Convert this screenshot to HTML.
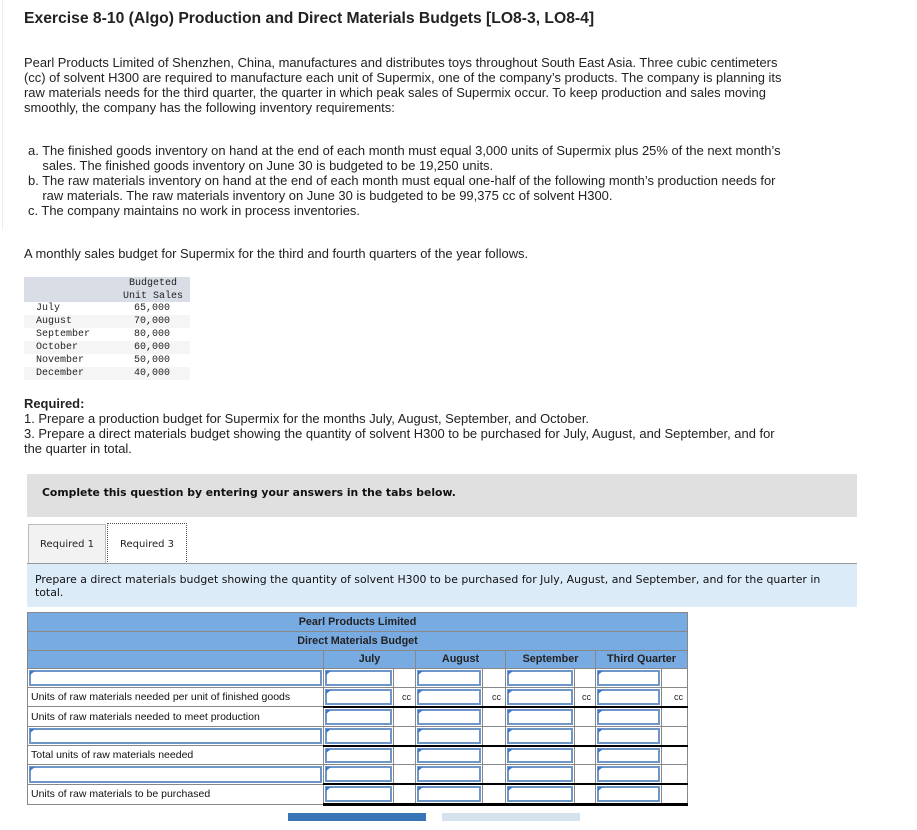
<!DOCTYPE html>
<html><head><meta charset="utf-8"><style>
body{margin:0;width:917px;height:830px;background:#fff;font-family:"Liberation Sans",sans-serif;color:#222;position:relative;overflow:hidden}
.a{position:absolute;white-space:nowrap}
.p{font-size:12.95px;line-height:15px}
.mono{font-family:"Liberation Mono",monospace;font-size:10px;line-height:13px}
table.b{position:absolute;left:27px;top:612px;border-collapse:collapse;font-size:10.5px;table-layout:fixed}
table.b td{border:1px solid #888;height:17.8px;padding:0;position:relative}
.h td{background:#79abe3;text-align:center;font-weight:bold;color:#222;font-size:10.8px}
.in{position:absolute;left:1px;top:1px;right:1px;bottom:1px;border:2px solid #6f96c8;background:#fff}
.in:before{content:"";position:absolute;left:-1px;top:-1px;border-left:5px solid #3a78d0;border-bottom:4px solid transparent}
.lbl{padding-left:3px!important;color:#111}
.cc{text-align:right;padding-right:4px!important;font-size:9px}
tr.tb td.v{border-bottom:2px solid #000}
</style></head><body>
<div class="a" style="left:2px;top:0;width:1px;height:230px;background:#eee"></div>
<div class="a" style="left:24px;top:10px;font-size:15.7px;font-weight:bold;color:#222">Exercise 8-10 (Algo) Production and Direct Materials Budgets [LO8-3, LO8-4]</div>
<div class="a p" style="left:24px;top:55px">Pearl Products Limited of Shenzhen, China, manufactures and distributes toys throughout South East Asia. Three cubic centimeters<br>(cc) of solvent H300 are required to manufacture each unit of Supermix, one of the company’s products. The company is planning its<br>raw materials needs for the third quarter, the quarter in which peak sales of Supermix occur. To keep production and sales moving<br>smoothly, the company has the following inventory requirements:</div>
<div class="a p" style="left:28px;top:143px">a. The finished goods inventory on hand at the end of each month must equal 3,000 units of Supermix plus 25% of the next month’s<br>&nbsp;&nbsp;&nbsp;&nbsp;sales. The finished goods inventory on June 30 is budgeted to be 19,250 units.<br>b. The raw materials inventory on hand at the end of each month must equal one-half of the following month’s production needs for<br>&nbsp;&nbsp;&nbsp;&nbsp;raw materials. The raw materials inventory on June 30 is budgeted to be 99,375 cc of solvent H300.<br>c. The company maintains no work in process inventories.</div>
<div class="a p" style="left:24px;top:246px">A monthly sales budget for Supermix for the third and fourth quarters of the year follows.</div>
<div class="a" style="left:24px;top:277px;width:166px;height:25px;background:#d9dde6"></div>
<div class="a" style="left:24px;top:315px;width:166px;height:13px;background:#f5f5f5"></div>
<div class="a" style="left:24px;top:341px;width:166px;height:13px;background:#f5f5f5"></div>
<div class="a" style="left:24px;top:367px;width:166px;height:13px;background:#f5f5f5"></div>
<div class="a mono" style="left:122px;top:277px;text-align:center;width:62px">Budgeted<br>Unit Sales</div>
<div class="a mono" style="left:36px;top:302px">July<br>August<br>September<br>October<br>November<br>December</div>
<div class="a mono" style="left:134px;top:302px">65,000<br>70,000<br>80,000<br>60,000<br>50,000<br>40,000</div>
<div class="a p" style="left:24px;top:396px"><b>Required:</b><br>1. Prepare a production budget for Supermix for the months July, August, September, and October.<br>3. Prepare a direct materials budget showing the quantity of solvent H300 to be purchased for July, August, and September, and for<br>the quarter in total.</div>
<div class="a" style="left:27px;top:474px;width:830px;height:43px;background:#e0e0e0"></div>
<div class="a" style="left:42px;top:486px;font-family:'DejaVu Sans',sans-serif;font-size:10.8px;font-weight:bold;color:#111">Complete this question by entering your answers in the tabs below.</div>
<div class="a" style="left:28px;top:524px;width:76px;height:39px;background:#f2f2f2;border:1px solid #bbb;border-bottom:none"></div>
<div class="a" style="left:107px;top:523px;width:78px;height:40px;background:#fff;border:1px dotted #556;border-bottom:none"></div>
<div class="a" style="left:40px;top:539px;font-family:'DejaVu Sans',sans-serif;font-size:10px">Required 1</div>
<div class="a" style="left:120px;top:539px;font-family:'DejaVu Sans',sans-serif;font-size:10px">Required 3</div>
<div class="a" style="left:27px;top:563px;width:830px;height:1px;background:#999"></div>
<div class="a" style="left:27px;top:564px;width:830px;height:43px;background:#dbebf8"></div>
<div class="a" style="left:35px;top:573px;font-family:'DejaVu Sans',sans-serif;font-size:10.9px;line-height:13px;color:#111">Prepare a direct materials budget showing the quantity of solvent H300 to be purchased for July, August, and September, and for the quarter in<br>total.</div>
<table class="b">
<colgroup><col style="width:296px"><col style="width:70px"><col style="width:22px"><col style="width:67px"><col style="width:23px"><col style="width:69px"><col style="width:21px"><col style="width:66px"><col style="width:26px"></colgroup>
<tr class="h"><td colspan="9">Pearl Products Limited</td></tr>
<tr class="h"><td colspan="9">Direct Materials Budget</td></tr>
<tr class="h"><td></td><td colspan="2">July</td><td colspan="2">August</td><td colspan="2">September</td><td colspan="2">Third Quarter</td></tr>
<tr><td><div class="in"></div></td><td><div class="in"></div></td><td></td><td><div class="in"></div></td><td></td><td><div class="in"></div></td><td></td><td><div class="in"></div></td><td></td></tr>
<tr class="tb"><td class="lbl">Units of raw materials needed per unit of finished goods</td><td class="v"><div class="in"></div></td><td class="cc v">cc</td><td class="v"><div class="in"></div></td><td class="cc v">cc</td><td class="v"><div class="in"></div></td><td class="cc v">cc</td><td class="v"><div class="in"></div></td><td class="cc v">cc</td></tr>
<tr><td class="lbl">Units of raw materials needed to meet production</td><td><div class="in"></div></td><td></td><td><div class="in"></div></td><td></td><td><div class="in"></div></td><td></td><td><div class="in"></div></td><td></td></tr>
<tr class="tb"><td><div class="in"></div></td><td class="v"><div class="in"></div></td><td class="v"></td><td class="v"><div class="in"></div></td><td class="v"></td><td class="v"><div class="in"></div></td><td class="v"></td><td class="v"><div class="in"></div></td><td class="v"></td></tr>
<tr><td class="lbl">Total units of raw materials needed</td><td><div class="in"></div></td><td></td><td><div class="in"></div></td><td></td><td><div class="in"></div></td><td></td><td><div class="in"></div></td><td></td></tr>
<tr class="tb"><td><div class="in"></div></td><td class="v"><div class="in"></div></td><td class="v"></td><td class="v"><div class="in"></div></td><td class="v"></td><td class="v"><div class="in"></div></td><td class="v"></td><td class="v"><div class="in"></div></td><td class="v"></td></tr>
<tr class="tb"><td class="lbl">Units of raw materials to be purchased</td><td class="v" style="border-bottom:3px solid #000"><div class="in"></div></td><td class="v" style="border-bottom:3px solid #000"></td><td class="v" style="border-bottom:3px solid #000"><div class="in"></div></td><td class="v" style="border-bottom:3px solid #000"></td><td class="v" style="border-bottom:3px solid #000"><div class="in"></div></td><td class="v" style="border-bottom:3px solid #000"></td><td class="v" style="border-bottom:3px solid #000"><div class="in"></div></td><td class="v" style="border-bottom:3px solid #000"></td></tr>
</table>
<div class="a" style="left:288px;top:813px;width:138px;height:8px;background:#3a74b8"></div>
<div class="a" style="left:442px;top:813px;width:138px;height:8px;background:#d6e1ee"></div>
</body></html>
